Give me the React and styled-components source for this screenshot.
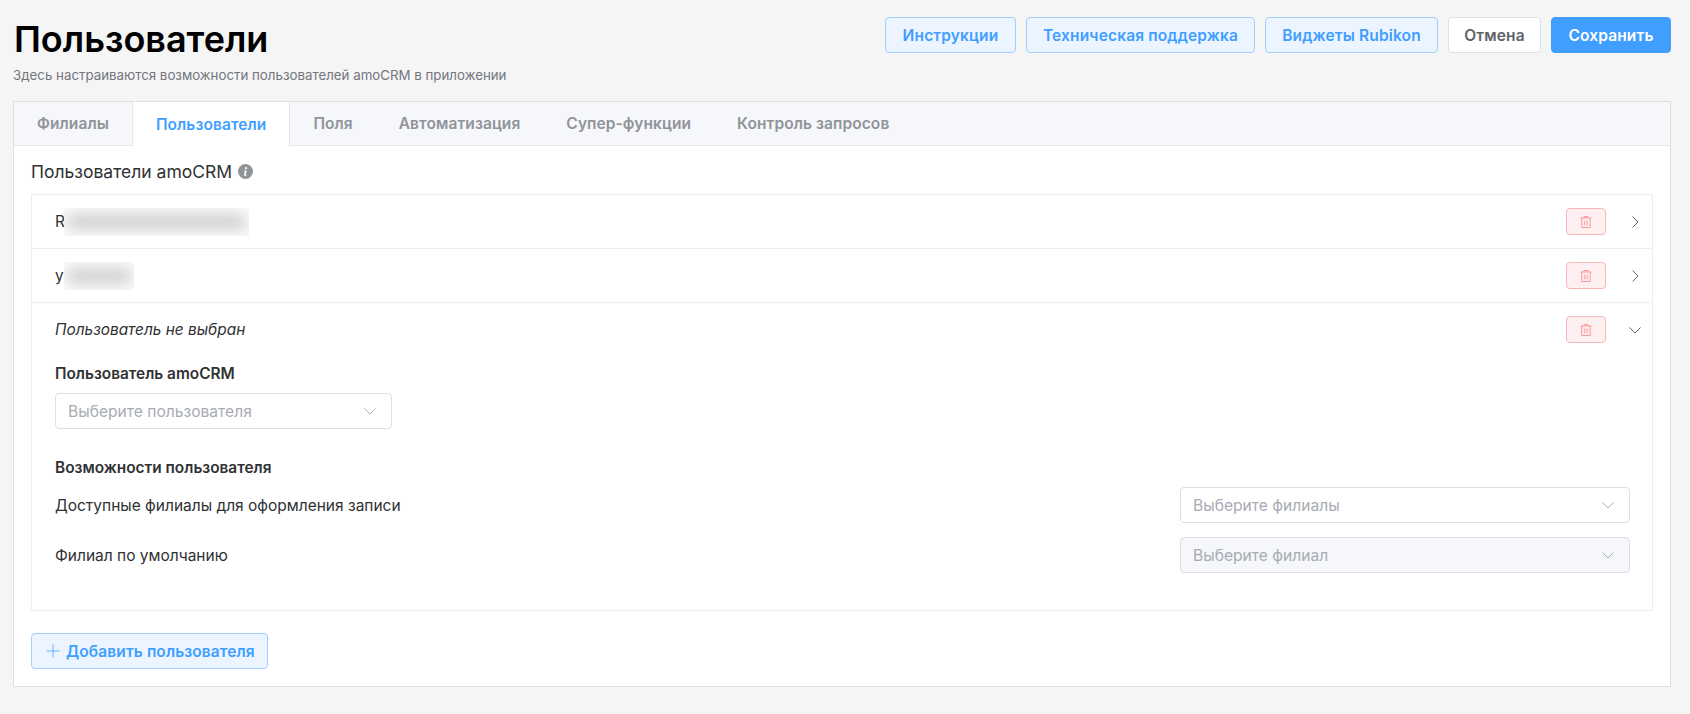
import React from "react";
import styled, { createGlobalStyle } from "styled-components";

const Global = createGlobalStyle`
  html, body { margin: 0; padding: 0; background: #f5f5f5; }
  body { font-family: Inter, "Noto Sans", sans-serif; color: #303133; }
  * { box-sizing: border-box; }
`;
const Page = styled.div`
  height: 714px;
  padding: 17px 19px 0 13px;
  overflow: hidden;
`;
const Header = styled.header`
  display: flex;
  justify-content: space-between;
  align-items: flex-start;
  height: 84px;
`;
const TitleBlock = styled.div`
  display: flex;
  flex-direction: column;
`;
const Title = styled.h1`
  margin: 0 0 0 1px;
  font-size: 36px;
  line-height: 44px;
  font-weight: 600;
  color: #000;
  letter-spacing: 0;
`;
const Subtitle = styled.p`
  margin: 6px 0 0;
  font-size: 13.3px;
  line-height: 16px;
  color: #73767d;
`;
const Actions = styled.div`
  display: flex;
  gap: 10px;
`;
const TopButton = styled.button`
  height: 36px;
  padding: 0;
  width: ${(p) => p.$w}px;
  border-radius: 4px;
  font: 600 15.5px Inter, sans-serif;
  letter-spacing: 0.15px;
  white-space: nowrap;
  border: 1px solid ${(p) => (p.$kind === "solid" ? "#409eff" : p.$kind === "plain" ? "#dcdfe6" : "#a0cfff")};
  background: ${(p) => (p.$kind === "solid" ? "#409eff" : p.$kind === "plain" ? "#fff" : "#ecf5ff")};
  color: ${(p) => (p.$kind === "solid" ? "#fff" : p.$kind === "plain" ? "#606266" : "#409eff")};
`;
const Card = styled.section`
  height: 586px;
  background: #fff;
  border: 1px solid #dcdfe6;
  display: flex;
  flex-direction: column;
`;
const TabBar = styled.nav`
  display: flex;
  height: 44px;
  flex: none;
  background: #f5f7fa;
  border-bottom: 1px solid #e4e7ed;
`;
const Tab = styled.div`
  padding: 0 23px;
  height: ${(p) => (p.$active ? "44px" : "43px")};
  display: flex;
  align-items: center;
  font-size: 15.5px;
  font-weight: 600;
  letter-spacing: 0.08px;
  color: ${(p) => (p.$active ? "#409eff" : "#909399")};
  ${(p) =>
    p.$active
      ? "background:#fff;border-left:1px solid #e4e7ed;border-right:1px solid #e4e7ed;"
      : ""}
`;
const CardBody = styled.div`
  padding: 13px 17px 0 17px;
`;
const SectionTitle = styled.h2`
  margin: 0 0 11px;
  display: flex;
  align-items: center;
  gap: 6px;
  height: 24px;
  font-size: 17.5px;
  font-weight: 400;
  color: #303133;
`;
const List = styled.div`
  border: 1px solid #ebeef5;
`;
const Item = styled.div`
  & + & {
    border-top: 1px solid #ebeef5;
  }
`;
const ItemHead = styled.div`
  height: 53px;
  padding: 0 0 0 23px;
  display: flex;
  align-items: center;
  font-size: 15.4px;
  color: #303133;
`;
const ItemName = styled.span`
  display: flex;
  align-items: center;
  flex: 1;
  font-style: ${(p) => (p.$empty ? "italic" : "normal")};
`;
const BlurBox = styled.span`
  display: block;
  width: ${(p) => p.$w}px;
  height: 28px;
  background: #fafafa;
  overflow: hidden;
  margin-left: ${(p) => p.$ml}px;
`;
const BlurInk = styled.span`
  display: block;
  height: 14px;
  margin: 7px 4px;
  background: #cdcdcd;
  filter: blur(7px);
`;
const DeleteBtn = styled.button`
  width: 40px;
  height: 27px;
  padding: 0;
  display: flex;
  align-items: center;
  justify-content: center;
  background: #fef0f0;
  border: 1px solid #fab6b6;
  border-radius: 4px;
  color: #f89898;
`;
const ChevronSlot = styled.span`
  width: 46px;
  display: flex;
  justify-content: center;
  padding-left: 12px;
  color: #606266;
`;
const ItemBody = styled.div`
  padding: 8px 22px 37px 23px;
`;
const Label = styled.div`
  font-size: 15.4px;
  font-weight: 600;
  line-height: 20px;
  color: #303133;
  margin-bottom: ${(p) => p.$mb}px;
`;
const Select = styled.div`
  width: ${(p) => p.$w}px;
  height: 36px;
  padding: 0 14px 0 12px;
  display: flex;
  align-items: center;
  justify-content: space-between;
  border: 1px solid #dcdfe6;
  border-radius: 4px;
  background: ${(p) => (p.$disabled ? "#f5f7fa" : "#fff")};
  color: #a8abb2;
  font-size: 15.6px;
`;
const Row = styled.div`
  display: flex;
  align-items: center;
  justify-content: space-between;
  height: 36px;
  margin-bottom: 14px;
  font-size: 15.5px;
  color: #303133;
  &:last-child { margin-bottom: 0; }
`;
const Spacer = styled.div`
  height: 29px;
`;
const AddButton = styled.button`
  margin-top: 22px;
  height: 36px;
  width: 237px;
  padding: 0 0 0 14px;
  display: flex;
  align-items: center;
  gap: 6px;
  background: #ecf5ff;
  border: 1px solid #a0cfff;
  border-radius: 4px;
  color: #409eff;
  font: 600 15.5px Inter, sans-serif;
  letter-spacing: 0.1px;
`;

const Chevron = ({ dir, size = 14, color = "currentColor" }) => (
  <svg width={size} height={size} viewBox="0 0 14 14" fill="none" stroke={color} strokeWidth="1">
    {dir === "right" ? <path d="M4.5 1.5 10 7l-5.500 5.500" /> : <path d="M1.500 4.500 7 10l5.500-5.500" />}
  </svg>
);
const Trash = () => (
  <svg width="14" height="14" viewBox="0 0 14 14" fill="none" stroke="currentColor" strokeWidth="1">
    <path d="M1.500 3h11M5 3V1.500h4V3M2.800 3v9.500h8.400V3M5.800 5.500v5M8.200 5.500v5" />
  </svg>
);
const Info = () => (
  <svg width="15" height="15" viewBox="0 0 16 16">
    <circle cx="8" cy="8" r="8" fill="#909399" />
    <circle cx="8.600" cy="4.500" r="1.200" fill="#fff" />
    <path d="M6.300 7h3l-1.200 4.700h1v.8H6.200l1.100-4.700h-1z" fill="#fff" />
  </svg>
);
const Plus = () => (
  <svg width="14" height="14" viewBox="0 0 14 14" fill="none" stroke="#66b1ff" strokeWidth="1">
    <path d="M7 .5v13M.5 7h13" />
  </svg>
);

const tabs = ["Филиалы", "Пользователи", "Поля", "Автоматизация", "Супер-функции", "Контроль запросов"];

export default function App() {
  return (
    <Page>
      <Global />
      <Header>
        <TitleBlock>
          <Title>Пользователи</Title>
          <Subtitle>Здесь настраиваются возможности пользователей amoCRM в приложении</Subtitle>
        </TitleBlock>
        <Actions>
          <TopButton $w={131}>Инструкции</TopButton>
          <TopButton $w={229}>Техническая поддержка</TopButton>
          <TopButton $w={173}>Виджеты Rubikon</TopButton>
          <TopButton $kind="plain" $w={93}>Отмена</TopButton>
          <TopButton $kind="solid" $w={120}>Сохранить</TopButton>
        </Actions>
      </Header>
      <Card>
        <TabBar>
          {tabs.map((t) => (
            <Tab key={t} $active={t === "Пользователи"}>{t}</Tab>
          ))}
        </TabBar>
        <CardBody>
          <SectionTitle>
            Пользователи amoCRM <Info />
          </SectionTitle>
          <List>
            <Item>
              <ItemHead>
                <ItemName>R<BlurBox $w={185} $ml={-1}><BlurInk /></BlurBox></ItemName>
                <DeleteBtn aria-label="Удалить"><Trash /></DeleteBtn>
                <ChevronSlot><Chevron dir="right" /></ChevronSlot>
              </ItemHead>
            </Item>
            <Item>
              <ItemHead>
                <ItemName>y<BlurBox $w={70} $ml={0}><BlurInk /></BlurBox></ItemName>
                <DeleteBtn aria-label="Удалить"><Trash /></DeleteBtn>
                <ChevronSlot><Chevron dir="right" /></ChevronSlot>
              </ItemHead>
            </Item>
            <Item>
              <ItemHead>
                <ItemName $empty>Пользователь не выбран</ItemName>
                <DeleteBtn aria-label="Удалить"><Trash /></DeleteBtn>
                <ChevronSlot><Chevron dir="down" /></ChevronSlot>
              </ItemHead>
              <ItemBody>
                <Label $mb={9}>Пользователь amoCRM</Label>
                <Select $w={337}>Выберите пользователя<Chevron dir="down" color="#a8abb2" /></Select>
                <Spacer />
                <Label $mb={9}>Возможности пользователя</Label>
                <Row>
                  Доступные филиалы для оформления записи
                  <Select $w={450}>Выберите филиалы<Chevron dir="down" color="#a8abb2" /></Select>
                </Row>
                <Row>
                  Филиал по умолчанию
                  <Select $w={450} $disabled>Выберите филиал<Chevron dir="down" color="#a8abb2" /></Select>
                </Row>
              </ItemBody>
            </Item>
          </List>
          <AddButton><Plus />Добавить пользователя</AddButton>
        </CardBody>
      </Card>
    </Page>
  );
}
